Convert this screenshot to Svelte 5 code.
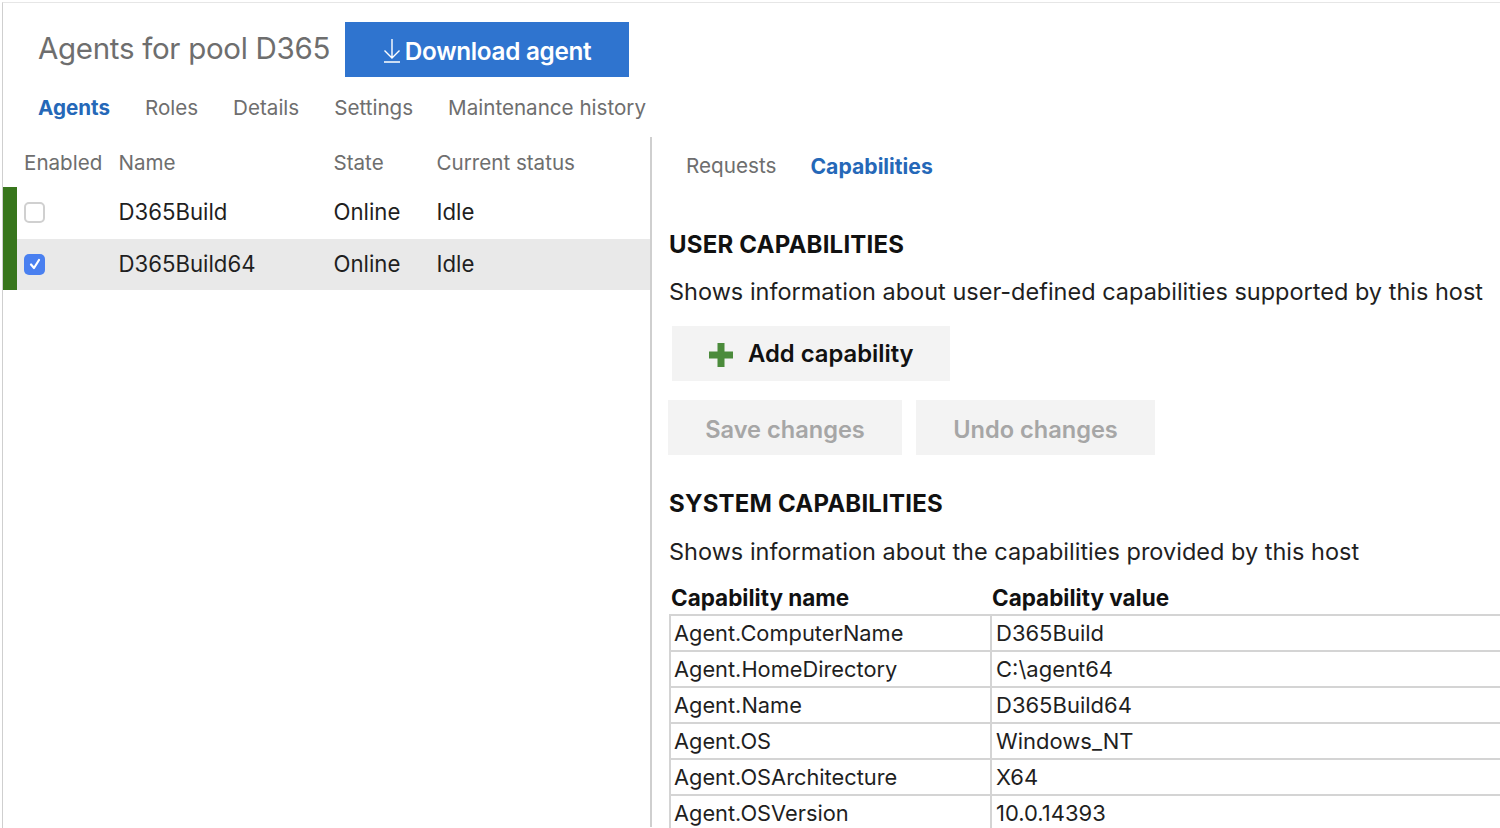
<script>
  const tabs = ['Agents', 'Roles', 'Details', 'Settings', 'Maintenance history'];
  const agents = [
    { name: 'D365Build', state: 'Online', status: 'Idle', enabled: false },
    { name: 'D365Build64', state: 'Online', status: 'Idle', enabled: true }
  ];
  const capabilities = [
    ['Agent.ComputerName', 'D365Build'],
    ['Agent.HomeDirectory', 'C:\\agent64'],
    ['Agent.Name', 'D365Build64'],
    ['Agent.OS', 'Windows_NT'],
    ['Agent.OSArchitecture', 'X64'],
    ['Agent.OSVersion', '10.0.14393']
  ];
</script>

<div class="page">
  <header class="title-row">
    <h1>Agents for pool D365</h1>
    <button class="download">
      <svg width="18" height="24" viewBox="0 0 18 24" fill="none" stroke="#fff" stroke-width="1.4">
        <path d="M9 0V19M1.500 11.500L9 19l7.500-7.500M1 23h16" />
      </svg>
      Download agent
    </button>
  </header>

  <nav class="tabs">
    {#each tabs as tab, i}
      <span class:active={i === 0}>{tab}</span>
    {/each}
  </nav>

  <div class="split">
    <section class="agents">
      <div class="row head">
        <span>Enabled</span>
        <span>Name</span>
        <span>State</span>
        <span>Current status</span>
      </div>
      {#each agents as agent}
        <div class="row agent" class:selected={agent.enabled}>
          <span class="check" class:on={agent.enabled}>
            {#if agent.enabled}
              <svg width="14" height="14" viewBox="0 0 14 14" fill="none" stroke="#fff" stroke-width="2.200" stroke-linecap="round" stroke-linejoin="round">
                <path d="M3 7.500L6 11l5-8" />
              </svg>
            {/if}
          </span>
          <span>{agent.name}</span>
          <span>{agent.state}</span>
          <span>{agent.status}</span>
        </div>
      {/each}
    </section>

    <section class="details">
      <div class="subtabs">
        <span>Requests</span>
        <span class="active">Capabilities</span>
      </div>

      <h2 class="user-title">USER CAPABILITIES</h2>
      <p>Shows information about user-defined capabilities supported by this host</p>

      <button class="add">
        <svg class="plus" width="26" height="26" viewBox="0 0 26 26">
          <path fill="#4b8b3b" d="M9.500 1h7v8.500H25v7h-8.500V25h-7v-8.500H1v-7h8.500z" />
        </svg>
        Add capability
      </button>

      <div class="actions">
        <button class="disabled save">Save changes</button>
        <button class="disabled undo">Undo changes</button>
      </div>

      <h2 class="system-title">SYSTEM CAPABILITIES</h2>
      <p class="system-text">Shows information about the capabilities provided by this host</p>

      <div class="cap-head">
        <span>Capability name</span>
        <span>Capability value</span>
      </div>
      <div class="cap-table">
        {#each capabilities as [name, value]}
          <div class="cap-row">
            <span>{name}</span>
            <span>{value}</span>
          </div>
        {/each}
      </div>
    </section>
  </div>
</div>

<style>
  :global(body) {
    margin: 0;
    background: #fff;
  }

  .page {
    height: 826px;
    margin: 2px 0 0 2px;
    box-sizing: border-box;
    border-top: 1px solid #e6e6e6;
    border-left: 1px solid #cfcfcf;
    overflow: hidden;
    font-family: Inter, "Noto Sans", sans-serif;
    color: #1f1f1f;
  }

  .title-row {
    display: flex;
    align-items: center;
    gap: 15px;
    padding: 19px 0 0 35px;
  }

  h1 {
    margin: 0 0 4px;
    font-size: 29.500px;
    font-weight: 400;
    letter-spacing: -0.3px;
    color: #6e6e6e;
  }

  button {
    border: none;
    font-family: inherit;
    padding: 0;
  }

  .download {
    width: 284px;
    height: 55px;
    display: flex;
    align-items: center;
    justify-content: center;
    gap: 4px;
    padding-top: 3px;
    box-sizing: border-box;
    background: #2f74cf;
    color: #fff;
    font-size: 24.300px;
    font-weight: 600;
    letter-spacing: -0.3px;
  }

  .tabs {
    display: flex;
    gap: 35px;
    padding: 19px 0 0 35px;
    height: 42px;
    box-sizing: border-box;
    margin-bottom: 18px;
    font-size: 20.600px;
    line-height: 24px;
    color: #6e6e6e;
  }

  .tabs .active,
  .subtabs .active {
    color: #2568b8;
    font-weight: 700;
  }

  .split {
    display: flex;
    height: 690px;
  }

  .agents {
    width: 647px;
    flex: none;
    border-right: 2px solid #cfcfcf;
  }

  .row {
    display: grid;
    grid-template-columns: 94.500px 215px 103px 1fr;
    align-items: center;
    padding-left: 21px;
    font-size: 20.600px;
  }

  .head {
    height: 50px;
    box-sizing: border-box;
    padding-top: 1px;
    color: #6e6e6e;
  }

  .agent {
    height: 51.500px;
    box-sizing: border-box;
    border-left: 14px solid #38761d;
    padding: 0 0 2px 7px;
    font-size: 22.200px;
  }

  .agent.selected {
    background: #e9e9e9;
  }

  .check {
    width: 21px;
    height: 21px;
    margin-top: 2px;
    box-sizing: border-box;
    border: 2px solid #d0d0d0;
    border-radius: 5px;
    background: #fff;
    display: flex;
    align-items: center;
    justify-content: center;
  }

  .check.on {
    border: none;
    background: #4a80f0;
  }

  .details {
    flex: 1;
    min-width: 0;
    padding-left: 17px;
  }

  .subtabs {
    display: flex;
    gap: 34px;
    padding: 16px 0 0 17px;
    font-size: 20.700px;
    line-height: 26px;
    color: #6e6e6e;
  }

  .subtabs .active {
    font-size: 21.200px;
  }

  h2 {
    margin: 0;
    font-size: 24px;
    line-height: 28px;
    font-weight: 700;
    letter-spacing: 0.2px;
    color: #111;
  }

  .user-title {
    margin-top: 52px;
  }

  p {
    margin: 19px 0 0;
    font-size: 23.500px;
    line-height: 28px;
    white-space: nowrap;
  }

  .add {
    margin: 20px 0 0 3px;
    width: 278px;
    height: 55px;
    display: flex;
    align-items: center;
    gap: 14px;
    padding-left: 36px;
    box-sizing: border-box;
    background: #f3f3f3;
    color: #111;
    font-size: 23.800px;
    font-weight: 600;
  }

  .plus {
    margin-top: 2px;
  }

  .actions {
    display: flex;
    gap: 14px;
    margin: 19px 0 0 -1px;
  }

  .disabled {
    height: 55px;
    padding-top: 3px;
    box-sizing: border-box;
    background: #f3f3f3;
    color: #a6a6a6;
    font-size: 23.600px;
    font-weight: 600;
  }

  .save {
    width: 234px;
  }

  .undo {
    width: 239px;
  }

  .system-title {
    margin-top: 35px;
  }

  p.system-text {
    margin-top: 20px;
  }

  .cap-head {
    display: grid;
    grid-template-columns: 321px 1fr;
    margin-top: 16px;
    padding-left: 2px;
    font-size: 22.500px;
    line-height: 32px;
    font-weight: 700;
    color: #111;
  }

  .cap-table {
    border-top: 2px solid #d4d4d4;
    border-left: 2px solid #d4d4d4;
  }

  .cap-row {
    display: grid;
    grid-template-columns: 319px 1fr;
    height: 36px;
    box-sizing: border-box;
    border-bottom: 2px solid #d4d4d4;
    font-size: 21.800px;
    line-height: 34px;
  }

  .cap-row span {
    padding-left: 3px;
  }

  .cap-row span + span {
    padding-left: 4px;
    font-size: 22px;
    border-left: 2px solid #d4d4d4;
  }
</style>
